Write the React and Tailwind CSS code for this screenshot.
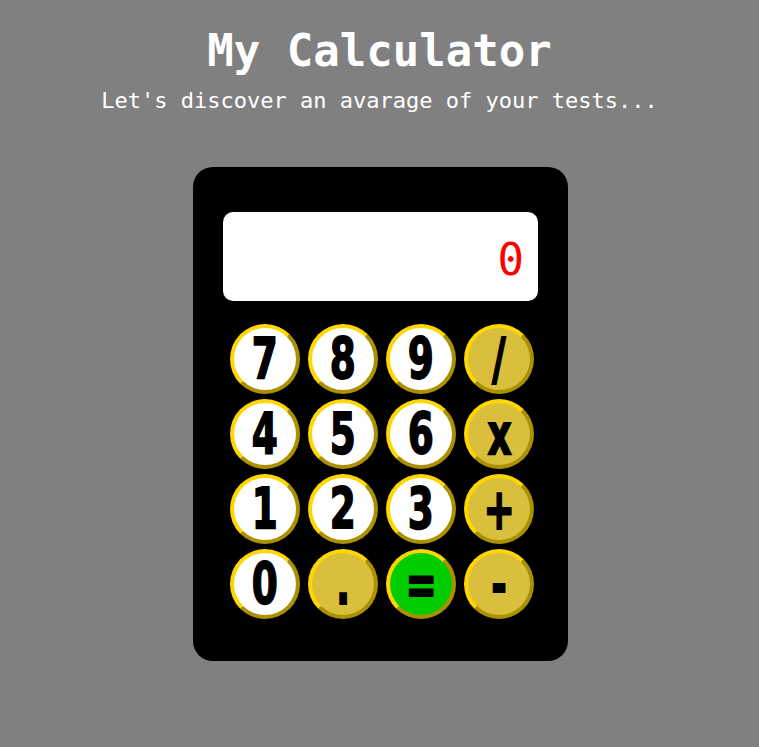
import React from "react";

const keys = [
  ["7", "num"], ["8", "num"], ["9", "num"], ["/", "op"],
  ["4", "num"], ["5", "num"], ["6", "num"], ["x", "op"],
  ["1", "num"], ["2", "num"], ["3", "num"], ["+", "op"],
  ["0", "num"], [".", "op"], ["=", "eq"], ["-", "op"],
];

function Key({ label, kind }) {
  const bg =
    kind === "num" ? "bg-white" : kind === "eq" ? "bg-[#00cc00]" : "bg-[#d9bf3c]";
  return (
    <button
      className={`${bg} w-[70px] h-[70px] rounded-full border-4 border-[#ffd700] [border-style:outset] flex items-center justify-center p-0 text-black`}
    >
      <span className="inline-block font-['DejaVu_Sans',sans-serif] font-bold text-[48px] leading-none scale-x-[0.78] scale-y-[1.2] [-webkit-text-stroke:1.5px_black]">
        {label}
      </span>
    </button>
  );
}

export default function App() {
  return (
    <div className="min-h-screen bg-[#808080] flex flex-col items-center font-['DejaVu_Sans_Mono',monospace] text-white">
      <h1 className="mt-[25px] text-[44px] leading-[52px] font-bold">My Calculator</h1>
      <p className="mt-[10px] text-[22px] leading-[28px]">Let's discover an avarage of your tests...</p>
      <div className="mt-[52px] w-[375px] bg-black rounded-[20px] pt-[45px] pb-[42px] px-[30px] ml-[2px]">
        <div className="h-[89px] bg-white rounded-[10px] flex items-center justify-end pr-[14px]">
          <span className="text-[44px] leading-none text-[#ff0000] font-['DejaVu_Sans_Mono',monospace] translate-y-[3px]">0</span>
        </div>
        <div className="mt-[23px] ml-[7px] grid grid-cols-[repeat(4,70px)] gap-x-[8px] gap-y-[5px]">
          {keys.map(([l, k]) => (
            <Key key={l} label={l} kind={k} />
          ))}
        </div>
      </div>
    </div>
  );
}
